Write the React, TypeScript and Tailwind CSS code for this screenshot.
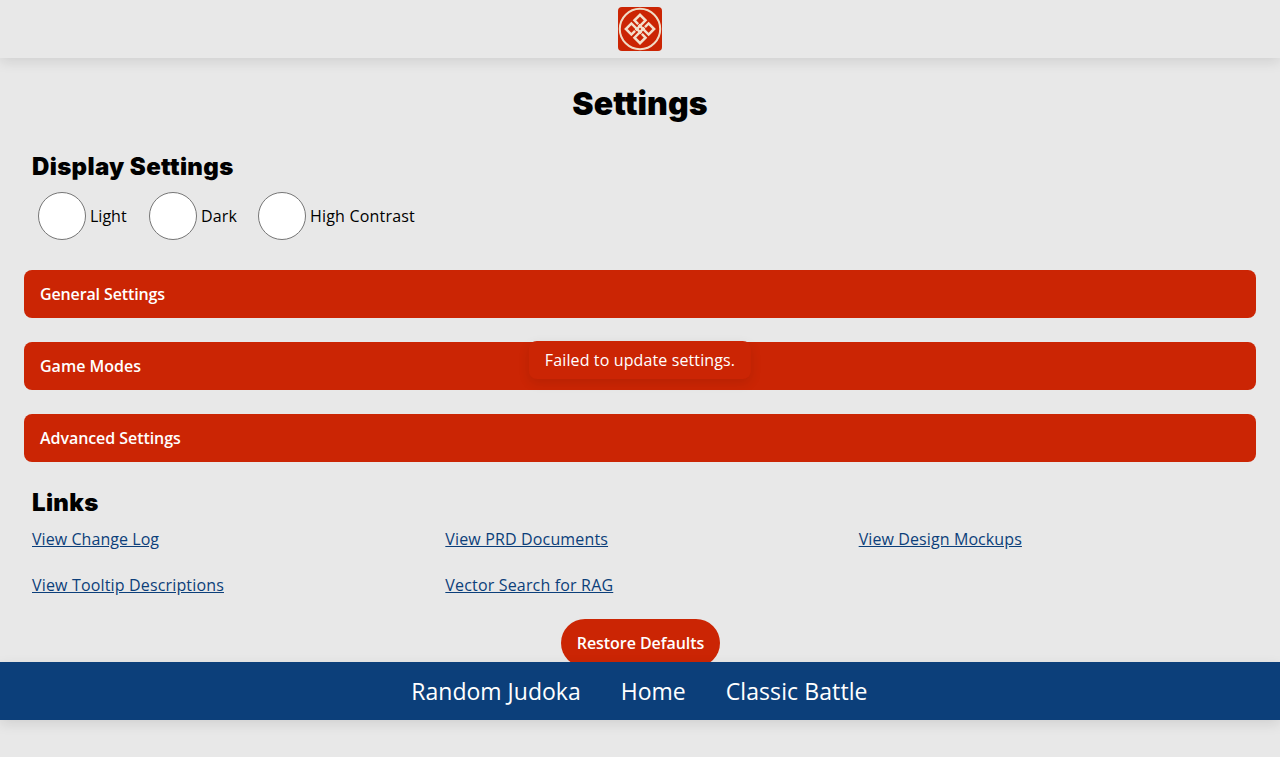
import React from "react";

const hook = "M19.8 26V12H12V19.8H17.2";

function Logo() {
  return (
    <svg width="44" height="44" viewBox="0 0 44 44" role="img" aria-label="Home">
      <rect width="44" height="44" rx="4" fill="#cb2504" />
      <circle cx="22" cy="22" r="20.2" fill="none" stroke="#f0dcc6" strokeWidth="2" />
      <g transform="rotate(45 22 22)" fill="none" stroke="#f3e0cc" strokeWidth="2.5">
        <path d={hook} />
        <path d={hook} transform="rotate(90 22 22)" />
        <path d={hook} transform="rotate(180 22 22)" />
        <path d={hook} transform="rotate(270 22 22)" />
      </g>
    </svg>
  );
}

const modes = [
  { id: "light", label: "Light", style: "ml-1.5 w-[111px]" },
  { id: "dark", label: "Dark", style: "w-[109px] tracking-[0.15px]" },
  { id: "contrast", label: "High Contrast", style: "tracking-[0.19px]" },
];
const sections = [
  { label: "General Settings", style: "tracking-[-0.13px]" },
  { label: "Game Modes", style: "" },
  { label: "Advanced Settings", style: "tracking-[-0.06px]" },
];
const links = [
  { label: "View Change Log", style: "tracking-[0.06px]" },
  { label: "View PRD Documents", style: "tracking-[0.15px]" },
  { label: "View Design Mockups", style: "tracking-[0.1px]" },
  { label: "View Tooltip Descriptions", style: "tracking-[0.16px]" },
  { label: "Vector Search for RAG", style: "tracking-[0.17px]" },
];

export default function App() {
  return (
    <div className="relative h-[757px] w-full overflow-hidden bg-[#e8e8e8] font-['Open_Sans',sans-serif] text-base text-black">
      <header className="flex h-[58px] items-start justify-center pt-[7px] shadow-[0_4px_12px_rgba(0,0,0,0.1)]">
        <Logo />
      </header>
      <main className="px-6">
        <h1 className="mt-[22px] text-center font-['Inter',sans-serif] text-[32px] leading-[48px] font-black tracking-[0.1px]">
          Settings
        </h1>
        <section className="px-2 pt-[21px]">
          <h2 className="font-['Inter',sans-serif] text-2xl leading-9 font-black tracking-[0.35px]">Display Settings</h2>
          <div className="mt-[7px] flex h-12">
            {modes.map((m) => (
              <label key={m.id} className={`flex shrink-0 items-center gap-1 whitespace-nowrap ${m.style}`}>
                <input type="radio" name="mode" className="size-12 shrink-0 appearance-none rounded-full border border-[#767676] bg-white" />
                {m.label}
              </label>
            ))}
          </div>
        </section>
        <div className="mt-[30px] flex flex-col gap-6">
          {sections.map((s) => (
            <button key={s.label} className={`h-12 rounded-lg bg-[#cb2504] px-4 text-left font-semibold text-white ${s.style}`}>
              {s.label}
            </button>
          ))}
        </div>
        <section className="px-2 pt-[23px]">
          <h2 className="font-['Inter',sans-serif] text-2xl leading-9 font-black tracking-[0.35px]">Links</h2>
          <nav className="mt-1.5 grid grid-cols-3 gap-x-6 gap-y-[22px]">
            {links.map((l) => (
              <div key={l.label}>
                <a href="#" className={`text-[#0c3f7a] underline ${l.style}`}>{l.label}</a>
              </div>
            ))}
          </nav>
        </section>
        <div className="mt-[22px] flex justify-center">
          <button className="ml-px h-12 w-[159px] rounded-full bg-[#cb2504] font-semibold tracking-[-0.06px] whitespace-nowrap text-white">Restore Defaults</button>
        </div>
      </main>
      <div className="absolute top-[340.6px] left-1/2 -translate-x-1/2 rounded-lg bg-[#cb2504] px-4 py-[7px] tracking-[0.12px] whitespace-nowrap text-white shadow-[0_4px_12px_rgba(0,0,0,0.1)]">
        Failed to update settings.
      </div>
      <footer className="absolute inset-x-0 top-[662px] flex h-[58px] items-center justify-center gap-10 bg-[#0c3f7a] pr-px text-[23px] text-white shadow-[0_4px_12px_rgba(0,0,0,0.1)]">
        <a href="#">Random Judoka</a>
        <a href="#">Home</a>
        <a href="#" className="tracking-[0.1px]">Classic Battle</a>
      </footer>
    </div>
  );
}
